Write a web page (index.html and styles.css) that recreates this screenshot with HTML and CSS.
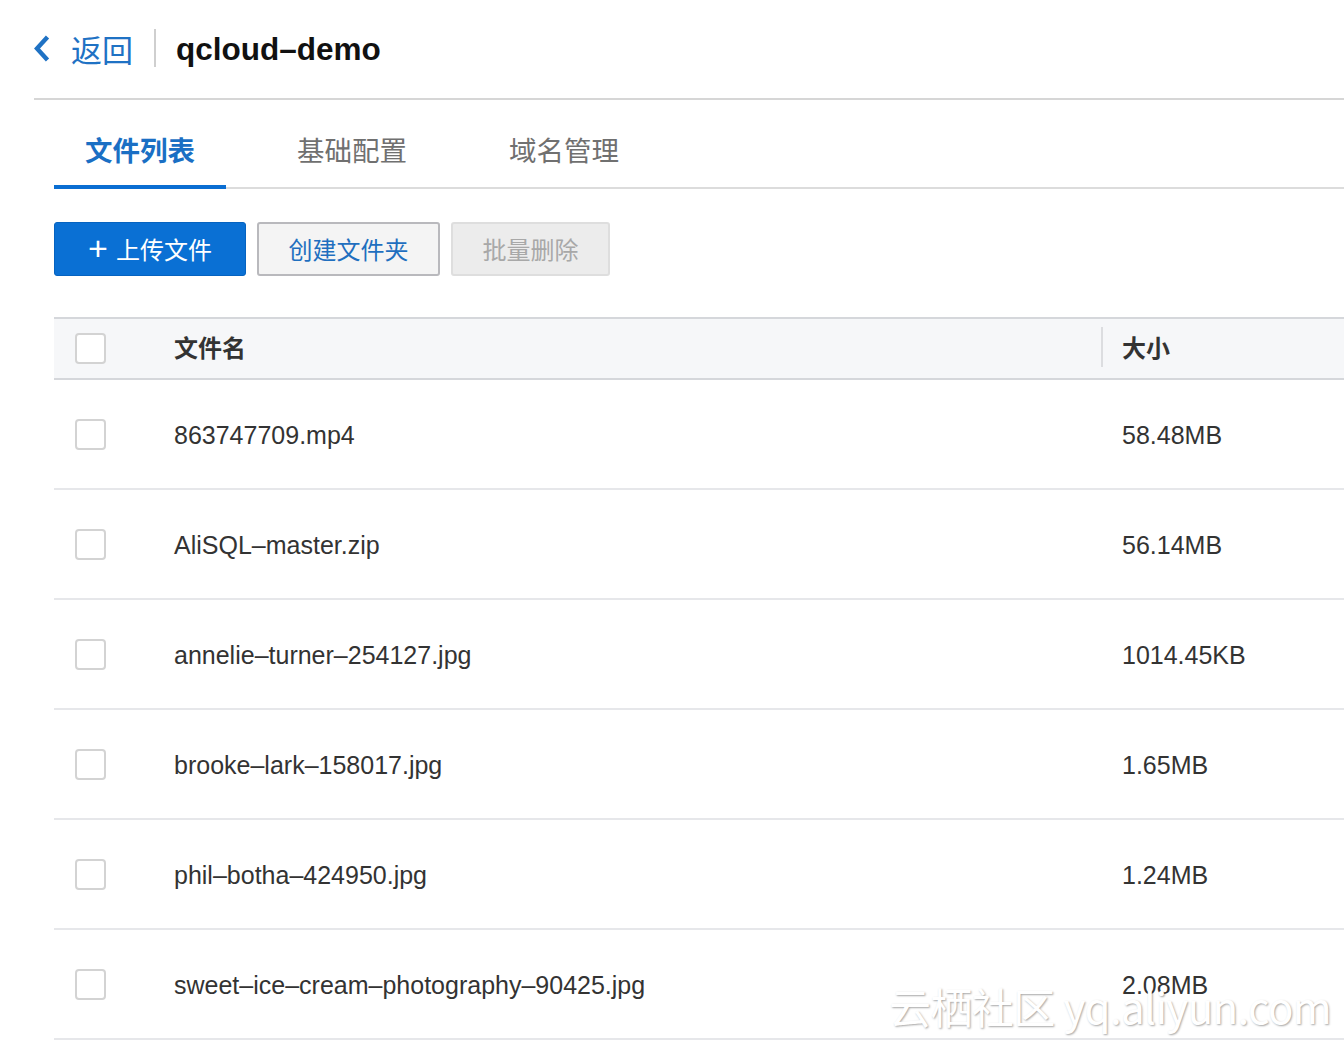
FILE: index.html
```html
<!DOCTYPE html>
<html lang="zh-CN">
<head>
<meta charset="utf-8">
<title>qcloud-demo</title>
<link rel="stylesheet" href="styles.css">
</head>
<body>
<div class="page">
  <header class="topbar">
    <a class="back" href="#">
      <svg class="chev" width="16" height="27" viewBox="0 0 16 27"><polyline points="13.5,2 3,13.5 13.5,25" fill="none" stroke="#1f72c4" stroke-width="4.4" stroke-linejoin="miter" stroke-linecap="butt"/></svg>
      <span class="back-text">返回</span>
    </a>
    <span class="vsep"></span>
    <h1 class="title">qcloud–demo</h1>
  </header>

  <main class="content">
    <nav class="tabs">
      <span class="tab active">文件列表</span>
      <span class="tab">基础配置</span>
      <span class="tab">域名管理</span>
    </nav>

    <div class="toolbar">
      <button class="btn btn-primary"><span class="plus">+</span>上传文件</button>
      <button class="btn btn-default">创建文件夹</button>
      <button class="btn btn-disabled">批量删除</button>
    </div>

    <div class="table">
      <div class="row head">
        <div class="c-check"><span class="cb"></span></div>
        <div class="c-name">文件名</div>
        <div class="c-size"><span class="colsep"></span>大小</div>
      </div>
      <div class="row">
        <div class="c-check"><span class="cb"></span></div>
        <div class="c-name">863747709.mp4</div>
        <div class="c-size">58.48MB</div>
      </div>
      <div class="row">
        <div class="c-check"><span class="cb"></span></div>
        <div class="c-name">AliSQL–master.zip</div>
        <div class="c-size">56.14MB</div>
      </div>
      <div class="row">
        <div class="c-check"><span class="cb"></span></div>
        <div class="c-name">annelie–turner–254127.jpg</div>
        <div class="c-size">1014.45KB</div>
      </div>
      <div class="row">
        <div class="c-check"><span class="cb"></span></div>
        <div class="c-name">brooke–lark–158017.jpg</div>
        <div class="c-size">1.65MB</div>
      </div>
      <div class="row">
        <div class="c-check"><span class="cb"></span></div>
        <div class="c-name">phil–botha–424950.jpg</div>
        <div class="c-size">1.24MB</div>
      </div>
      <div class="row">
        <div class="c-check"><span class="cb"></span></div>
        <div class="c-name">sweet–ice–cream–photography–90425.jpg</div>
        <div class="c-size">2.08MB</div>
      </div>
    </div>
  </main>
  <div class="watermark">云栖社区 yq.aliyun.com</div>
</div>
</body>
</html>
```

FILE: styles.css
```css
* { box-sizing: border-box; }
html, body { margin: 0; padding: 0; background: #fff; }
body {
  font-family: "Liberation Sans", "Noto Sans CJK SC", Arial, sans-serif;
  color: #333;
  overflow: hidden;
  width: 1344px;
  height: 1040px;
}
.page { position: relative; padding-left: 34px; height: 1040px; }

.topbar {
  display: flex;
  align-items: center;
  height: 100px;
  border-bottom: 2px solid #d6d6d6;
  padding-bottom: 2px;
}
.back { display: flex; align-items: center; text-decoration: none; color: #1f72c4; }
.chev { margin-right: 21px; display: block; }
.back-text { font-size: 31px; font-family: "Noto Sans CJK SC", sans-serif; font-weight: 400; line-height: 1; }
.vsep { width: 2px; height: 38px; background: #cfcfcf; margin: 0 20px 0 21px; }
.title {
  margin: 3px 0 0;
  font-size: 31.5px;
  font-weight: 700;
  color: #111;
  line-height: 1;
}

.content { padding-left: 20px; }

.tabs {
  display: flex;
  height: 89px;
  border-bottom: 2px solid #dcdcdc;
  align-items: stretch;
}
.tab {
  font-family: "Noto Sans CJK SC", sans-serif;
  font-size: 27.5px;
  color: #707070;
  padding: 12px 31px 0;
  margin-right: 40px;
  display: flex;
  align-items: center;
  margin-bottom: -2px;
  border-bottom: 4px solid transparent;
}
.tab.active { color: #1a6fc4; font-weight: 700; border-bottom-color: #0a6ed2; }

.toolbar { display: flex; gap: 11px; margin-top: 33px; }
.btn {
  height: 54px;
  font-family: "Noto Sans CJK SC", sans-serif;
  font-size: 24px;
  border-radius: 3px;
  display: flex;
  align-items: center;
  justify-content: center;
  padding: 0;
  line-height: 1;
}
.btn-primary { background: #0a70d4; border: 1px solid #0663c0; color: #fff; width: 192px; }
.plus { font-family: "Liberation Sans", sans-serif; font-weight: 300; font-size: 34px; margin-right: 8px; margin-top: -3px; }
.btn-default { background: #f4f4f4; border: 2px solid #b9b9bd; color: #1f6fbf; width: 183px; }
.btn-disabled { background: #ececec; border: 2px solid #dedede; color: #a8a8a8; width: 159px; }

.table { margin-top: 41px; }
.row {
  display: flex;
  align-items: center;
  height: 110px;
  border-bottom: 2px solid #e6e7ea;
  font-size: 25px;
  color: #333;
}
.row .c-name, .row .c-size { margin-top: 3px; }
.row.head {
  height: 63px;
  background: #f6f7f9;
  border-top: 2px solid #d5d7db;
  border-bottom: 2px solid #d5d7db;
  font-family: "Noto Sans CJK SC", sans-serif;
  font-size: 24px;
  font-weight: 700;
  color: #333;
}
.row.head .c-name, .row.head .c-size { margin-top: -5px; }
.c-check { width: 120px; padding-left: 21px; display: flex; align-items: center; }
.c-name { width: 927px; }
.c-size { flex: 1; position: relative; padding-left: 21px; }
.colsep { position: absolute; left: 0; top: -21px; width: 2px; height: 40px; background: #dcdde0; }
.head .colsep { top: -2px; }
.cb {
  display: block;
  width: 31px;
  height: 31px;
  border: 2px solid #d3d3d3;
  border-radius: 4px;
  background: #fff;
}

.watermark {
  position: absolute;
  left: 889px;
  top: 985px;
  font-family: "Noto Sans CJK SC", sans-serif;
  font-size: 42px;
  line-height: 1;
  color: #fff;
  letter-spacing: -0.6px;
  text-shadow: 1px 1px 2px rgba(0,0,0,0.35);
  white-space: nowrap;
}
```
